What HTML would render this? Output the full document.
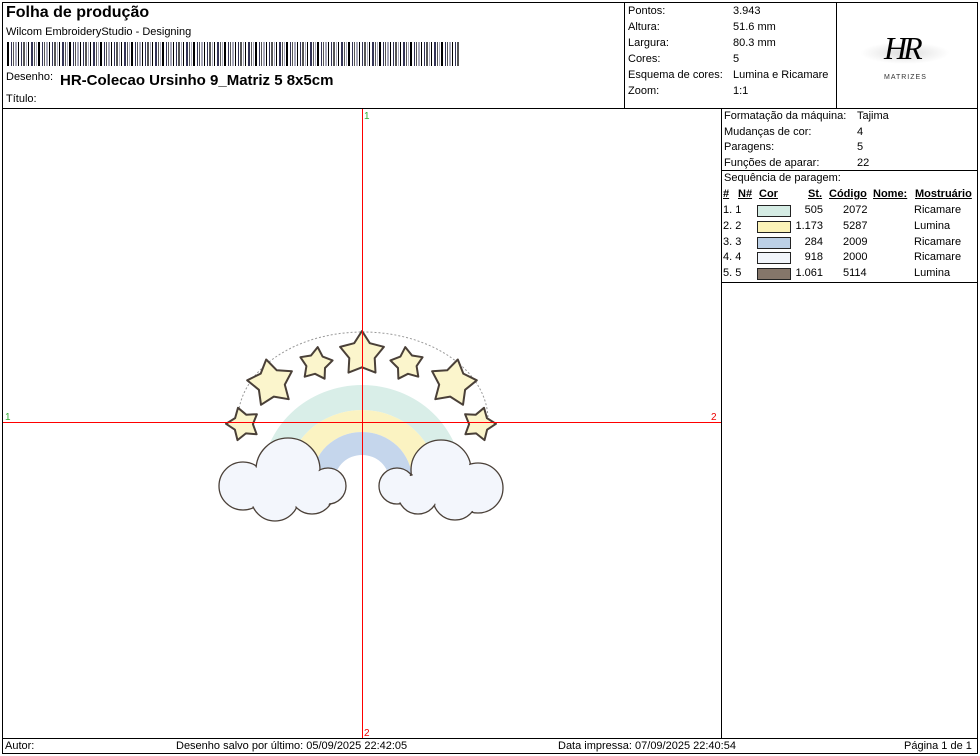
<!DOCTYPE html>
<html><head><meta charset="utf-8"><style>
*{margin:0;padding:0;box-sizing:border-box}
body{width:980px;height:756px;background:#fff;font-family:"Liberation Sans",sans-serif;color:#000;position:relative;overflow:hidden;font-size:11px}
.a{position:absolute;white-space:nowrap}
.l{position:absolute;background:#000}
</style></head><body>
<div class="l" style="left:2px;top:2px;width:976px;height:1px"></div>
<div class="l" style="left:2px;top:753px;width:976px;height:1px"></div>
<div class="l" style="left:2px;top:2px;width:1px;height:752px"></div>
<div class="l" style="left:977px;top:2px;width:1px;height:752px"></div>
<div class="l" style="left:2px;top:108px;width:976px;height:1px"></div>
<div class="l" style="left:624px;top:2px;width:1px;height:106px"></div>
<div class="l" style="left:836px;top:2px;width:1px;height:106px"></div>
<div class="l" style="left:721px;top:108px;width:1px;height:630px"></div>
<div class="l" style="left:721px;top:170px;width:257px;height:1px"></div>
<div class="l" style="left:721px;top:282px;width:257px;height:1px"></div>
<div class="l" style="left:2px;top:738px;width:976px;height:1px"></div>

<div class="a" style="left:6px;top:4px;font-size:16px;font-weight:bold">Folha de produção</div>
<div class="a" style="left:6px;top:26px;font-size:11px">Wilcom EmbroideryStudio - Designing</div>
<svg class="a" style="left:7px;top:42px" width="455" height="24" id="bc"></svg>
<div class="a" style="left:6px;top:71px;font-size:11px">Desenho:</div>
<div class="a" style="left:60px;top:72px;font-size:15px;font-weight:bold">HR-Colecao Ursinho 9_Matriz 5 8x5cm</div>
<div class="a" style="left:6px;top:93px;font-size:11px">Título:</div>

<div class="a" style="left:628px;top:3px;line-height:16px;font-size:11px">Pontos:<br>Altura:<br>Largura:<br>Cores:<br>Esquema de cores:<br>Zoom:</div>
<div class="a" style="left:733px;top:3px;line-height:16px;font-size:11px">3.943<br>51.6 mm<br>80.3 mm<br>5<br>Lumina e Ricamare<br>1:1</div>

<div class="a" style="left:860px;top:30px;width:90px;height:50px;">
<div style="position:absolute;left:0;top:12px;width:90px;height:22px;border-radius:12px;background:radial-gradient(ellipse,#ddd,#fff 70%)"></div>
<div style="position:absolute;left:24px;top:0;font:italic 32px 'Liberation Serif',serif;letter-spacing:-4px">HR</div>
<div style="position:absolute;left:24px;top:44px;font-size:7px;letter-spacing:1px;color:#333">MATRIZES</div>
</div>

<div class="a" style="left:724px;top:109px;line-height:15.6px;font-size:11px">Formatação da máquina:<br>Mudanças de cor:<br>Paragens:<br>Funções de aparar:</div>
<div class="a" style="left:857px;top:109px;line-height:15.6px;font-size:11px">Tajima<br>4<br>5<br>22</div>
<div class="a" style="left:724px;top:172px;font-size:11px">Sequência de paragem:</div>
<div class="a" style="left:723px;top:188px;font-size:11px;font-weight:bold;text-decoration:underline">#</div>
<div class="a" style="left:738px;top:188px;font-size:11px;font-weight:bold;text-decoration:underline">N#</div>
<div class="a" style="left:759px;top:188px;font-size:11px;font-weight:bold;text-decoration:underline">Cor</div>
<div class="a" style="left:808px;top:188px;font-size:11px;font-weight:bold;text-decoration:underline">St.</div>
<div class="a" style="left:829px;top:188px;font-size:11px;font-weight:bold;text-decoration:underline">Código</div>
<div class="a" style="left:873px;top:188px;font-size:11px;font-weight:bold;text-decoration:underline">Nome:</div>
<div class="a" style="left:915px;top:188px;font-size:11px;font-weight:bold;text-decoration:underline">Mostruário</div>
<div id="rows"></div>

<svg class="a" style="left:0;top:0" width="980" height="756">
<g id="art"></g>
<line x1="362.5" y1="109" x2="362.5" y2="738" stroke="#f00" stroke-width="1"/>
<line x1="3" y1="422.5" x2="721" y2="422.5" stroke="#f00" stroke-width="1"/>
<text x="364" y="119" font-size="10" fill="#3a3" font-family="Liberation Sans">1</text>
<text x="5" y="420" font-size="10" fill="#3a3" font-family="Liberation Sans">1</text>
<text x="711" y="420" font-size="10" fill="#e00" font-family="Liberation Sans">2</text>
<text x="364" y="736" font-size="10" fill="#e00" font-family="Liberation Sans">2</text>
</svg>

<div class="a" style="left:5px;top:740px;font-size:11px">Autor:</div>
<div class="a" style="left:176px;top:740px;font-size:11px">Desenho salvo por último: 05/09/2025 22:42:05</div>
<div class="a" style="left:558px;top:740px;font-size:11px">Data impressa: 07/09/2025 22:40:54</div>
<div class="a" style="left:904px;top:740px;font-size:11px">Página 1 de 1</div>

<script>
var s='',x=0,i=0,cols=['#000','#335','#555','#aab'];
while(x<453){var w=(i*7%3===0)?2:1;s+='<rect x="'+x+'" y="0" width="'+w+'" height="24" fill="'+cols[i%4]+'"/>';x+=w+((i*5%4===0)?2:1);i++;}
document.getElementById('bc').innerHTML=s;
var r=[['1. 1','#d5ece4','505','2072','Ricamare'],['2. 2','#fbf3b8','1.173','5287','Lumina'],['3. 3','#bcd0e6','284','2009','Ricamare'],['4. 4','#f1f5fb','918','2000','Ricamare'],['5. 5','#85766a','1.061','5114','Lumina']];
var h='';r.forEach(function(a,k){var y=204+k*15.8;
h+='<div class="a" style="left:723px;top:'+y+'px">'+a[0]+'</div><div class="a" style="left:757px;top:'+(y+1)+'px;width:34px;height:12px;border:1px solid #222;background:'+a[1]+'"></div><div class="a" style="left:770px;top:'+y+'px;width:53px;text-align:right">'+a[2]+'</div><div class="a" style="left:843px;top:'+y+'px">'+a[3]+'</div><div class="a" style="left:914px;top:'+y+'px">'+a[4]+'</div>';});
document.getElementById('rows').innerHTML=h;
function star(cx,cy,R,rot){rot=rot||0;var p='';for(var j=0;j<10;j++){var a=-Math.PI/2+rot+j*Math.PI/5,rr=j%2?R*0.58:R;p+=(j?'L':'M')+(cx+rr*Math.cos(a)).toFixed(1)+' '+(cy+rr*Math.sin(a)).toFixed(1);}return '<path d="'+p+'Z" fill="#fbf5cc" stroke="#4a4038" stroke-width="2" stroke-linejoin="round"/>';}
var g='';
g+='<path d="M262 480 A100 95 0 0 1 462 480 L437 480 A75 70 0 0 0 287 480Z" fill="#d9eee8"/>';
g+='<path d="M287 480 A75 70 0 0 1 437 480 L412 480 A50 48 0 0 0 312 480Z" fill="#fbf3c2"/>';
g+='<path d="M312 480 A50 48 0 0 1 412 480 L389 480 A27 25 0 0 0 335 480Z" fill="#c5d6ec"/>';
g+='<path d="M238 420 A125 88 0 0 1 488 420" fill="none" stroke="#999" stroke-dasharray="2 2"/>';
function cloud(cs){var o='';cs.forEach(function(c){o+='<circle cx="'+c[0]+'" cy="'+c[1]+'" r="'+c[2]+'" fill="#f3f6fc" stroke="#4a4038" stroke-width="1.3"/>';});cs.forEach(function(c){o+='<circle cx="'+c[0]+'" cy="'+c[1]+'" r="'+(c[2]-1.3)+'" fill="#f3f6fc"/>';});return o;}
g+=cloud([[243,486,24],[288,470,32],[275,497,24],[312,492,22],[328,486,18]]);
g+=cloud([[397,486,18],[441,470,30],[478,488,25],[455,498,22],[418,494,20]]);
g+=star(362,354,23)+star(271,383,24,-0.2)+star(316,364,17,0.1)+star(407,364,17,-0.1)+star(453,383,24,0.2)+star(243,424,17,-0.3)+star(479,424,17,0.3);
document.getElementById('art').innerHTML=g;
</script>
</body></html>
